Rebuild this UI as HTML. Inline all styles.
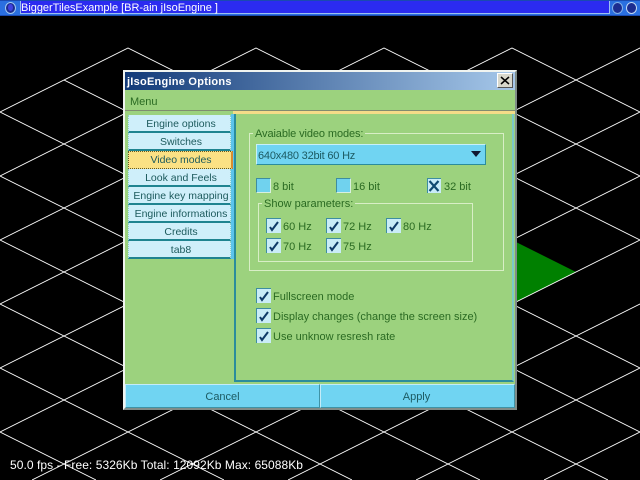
<!DOCTYPE html>
<html><head><meta charset="utf-8"><style>
html,body{margin:0;padding:0;background:#000}
#p{position:relative;width:640px;height:480px;overflow:hidden;background:#000;font-family:"Liberation Sans",sans-serif;font-size:11px}
#p div{position:absolute;box-sizing:border-box}
.t{white-space:nowrap;color:#2a6a22;line-height:14px}
.tab{left:128px;width:103px;height:18px;padding-left:3px;background:#cfeffa;border-bottom:2px solid #1f8490;border-left:1px dotted #8fd0c8;border-right:1px dotted #8fd0c8;color:#1c5a5c;text-align:center;line-height:18px;white-space:nowrap;font-size:10.5px}
.g{border:1px solid #d8eec6}
.leg{background:#9cd27e;padding:0 2px;color:#2a6a22;line-height:12px;white-space:nowrap}
.cb{width:15px;height:15px;background:#c9ecf8;border-left:1px solid #3d8da0;border-top:1px solid #3d8da0}
.cb svg{position:absolute;left:0;top:0}
.e{width:15px;height:15px;background:#70d2ee;border-left:1px solid #3d8da0;border-top:1px solid #3d8da0;border-right:1px solid #d8f0e0;border-bottom:1px solid #d8f0e0}
.btn{top:384px;height:24px;background:#70d4f2;border-top:1px solid #c4ecf8;border-left:1px solid #c4ecf8;border-right:1px solid #3f93a6;border-bottom:1px solid #3f93a6;color:#1c5a62;text-align:center;line-height:24px}
</style></head><body><div id="p">
<svg width="640" height="480" style="position:absolute;left:0;top:0" stroke="#fff" stroke-width="1" fill="none" shape-rendering="crispEdges">
<polygon points="512,240 576,272 512,304 448,272" fill="#008000" stroke="none"/>
<path d="M128 48L512 240M256 48L640 240M384 48L640 176M512 48L640 112M64 80L640 368M0 112L640 432M0 176L608 480M0 240L480 480M0 304L352 480M0 368L224 480M0 432L96 480"/>
<path d="M128 48L0 112M256 48L0 176M384 48L0 240M512 48L0 304M640 48L0 368M640 112L0 432M640 176L32 480M640 240L160 480M640 304L288 480M640 368L416 480M640 432L544 480"/>
</svg>
<div style="left:0;top:0;width:640px;height:16px;background:#2a6fe0;border-top:1px solid #1a4ab0;border-bottom:1px solid #1a4ab0"></div>
<div style="left:20px;top:1px;width:590px;height:13px;background:#2b2bf0;border-bottom:1px solid #9cc0f0;border-left:1px solid #9cc0f0;border-right:1px solid #9cc0f0"></div>
<div style="left:5px;top:2px;width:11px;height:12px;border-radius:50%;background:#1c2c90;border:1px solid #a0c8f0"></div>
<div style="left:8px;top:4px;width:5px;height:7px;border-radius:50%;background:#4040e0"></div>
<div style="left:612px;top:2px;width:11px;height:12px;border-radius:50%;background:#1c2c90;border:1px solid #80b0e8"></div>
<div style="left:626px;top:2px;width:11px;height:12px;border-radius:50%;background:#1c2c90;border:1px solid #c0d8f4"></div>
<div class="t" style="left:21px;top:1px;color:#fff;line-height:14px;letter-spacing:-.02px">BiggerTilesExample [BR-ain jIsoEngine ]</div>

<div style="left:123px;top:70px;width:394px;height:340px;background:#9cd27e;border-left:2px solid #f0f4f0;border-top:2px solid #f0f4f0;border-right:2px solid #808c88;border-bottom:2px solid #808c88"></div>
<div style="left:125px;top:72px;width:390px;height:18px;background:linear-gradient(90deg,#123a78,#a6c8ea)"></div>
<div class="t" style="left:127px;top:75px;color:#fff;font-weight:bold;letter-spacing:.25px">jIsoEngine Options</div>
<div style="left:497px;top:73px;width:16px;height:15px;background:#d8d8cc;border:1px solid;border-color:#fff #555 #555 #fff"></div>
<svg width="16" height="15" style="position:absolute;left:497px;top:73px" stroke="#000" stroke-width="1.500"><path d="M4 4L12 11M12 4L4 11"/></svg>
<div class="t" style="left:130px;top:95px">Menu</div>
<div style="left:125px;top:110px;width:390px;height:1px;background:#808c70"></div>
<div style="left:233px;top:111px;width:282px;height:3px;background:#f4dc88"></div>
<div style="left:234px;top:114px;width:280px;height:268px;border-left:2px solid #2b8c9c;border-bottom:2px solid #2b8c9c;border-right:2px solid #7cc8c8"></div>
<div style="left:231px;top:114px;width:3px;height:145px;background:#5cc4ec"></div>

<div class="tab" style="top:115px">Engine options</div>
<div class="tab" style="top:133px">Switches</div>
<div class="tab" style="top:151px;width:105px;padding-left:2px;background:#fbe184;border:1px dotted #665a20;border-right:2px solid #d88c30;line-height:17px">Video modes</div>
<div class="tab" style="top:169px">Look and Feels</div>
<div class="tab" style="top:187px">Engine key mapping</div>
<div class="tab" style="top:205px">Engine informations</div>
<div class="tab" style="top:223px">Credits</div>
<div class="tab" style="top:241px">tab8</div>

<div class="g" style="left:249px;top:133px;width:255px;height:138px"></div>
<div class="leg" style="left:253px;top:128px;letter-spacing:-.1px">Avaiable video modes:</div>
<div style="left:256px;top:144px;width:230px;height:21px;background:#70d4f2;border-top:1px solid #c8f0f8;border-left:1px solid #c8f0f8;border-right:1px solid #2b8c9c;border-bottom:1px solid #2b8c9c"></div>
<div class="t" style="left:258px;top:149px;color:#1c5a62;letter-spacing:-.2px">640x480 32bit 60 Hz</div>
<svg width="12" height="6" style="position:absolute;left:471px;top:151px"><path d="M0 0H10L5 6Z" fill="#101830"/></svg>

<div class="e" style="left:256px;top:178px"></div><div class="t" style="left:273px;top:180px">8 bit</div>
<div class="e" style="left:336px;top:178px"></div><div class="t" style="left:353px;top:180px">16 bit</div>
<div class="cb" style="left:427px;top:178px;width:14px"><svg width="14" height="15" stroke="#0f4a70" stroke-width="2.200" fill="none"><path d="M1.500 2L10.500 12M10.500 2L1.500 12"/></svg></div><div class="t" style="left:444px;top:180px">32 bit</div>

<div class="g" style="left:258px;top:203px;width:215px;height:59px"></div>
<div class="leg" style="left:262px;top:198px">Show parameters:</div>

<div class="cb" style="left:266px;top:218px"><svg width="14" height="14" stroke="#0f3a68" stroke-width="2" fill="none"><path d="M3 8L5 11L11 3"/></svg></div><div class="t" style="left:283px;top:220px">60 Hz</div>
<div class="cb" style="left:326px;top:218px"><svg width="14" height="14" stroke="#0f3a68" stroke-width="2" fill="none"><path d="M3 8L5 11L11 3"/></svg></div><div class="t" style="left:343px;top:220px">72 Hz</div>
<div class="cb" style="left:386px;top:218px"><svg width="14" height="14" stroke="#0f3a68" stroke-width="2" fill="none"><path d="M3 8L5 11L11 3"/></svg></div><div class="t" style="left:403px;top:220px">80 Hz</div>
<div class="cb" style="left:266px;top:238px"><svg width="14" height="14" stroke="#0f3a68" stroke-width="2" fill="none"><path d="M3 8L5 11L11 3"/></svg></div><div class="t" style="left:283px;top:240px">70 Hz</div>
<div class="cb" style="left:326px;top:238px"><svg width="14" height="14" stroke="#0f3a68" stroke-width="2" fill="none"><path d="M3 8L5 11L11 3"/></svg></div><div class="t" style="left:343px;top:240px">75 Hz</div>

<div class="cb" style="left:256px;top:288px"><svg width="14" height="14" stroke="#0f3a68" stroke-width="2" fill="none"><path d="M3 8L5 11L11 3"/></svg></div><div class="t" style="left:273px;top:290px">Fullscreen mode</div>
<div class="cb" style="left:256px;top:308px"><svg width="14" height="14" stroke="#0f3a68" stroke-width="2" fill="none"><path d="M3 8L5 11L11 3"/></svg></div><div class="t" style="left:273px;top:310px">Display changes (change the screen size)</div>
<div class="cb" style="left:256px;top:328px"><svg width="14" height="14" stroke="#0f3a68" stroke-width="2" fill="none"><path d="M3 8L5 11L11 3"/></svg></div><div class="t" style="left:273px;top:330px">Use unknow resresh rate</div>

<div class="btn" style="left:125px;width:195px">Cancel</div>
<div class="btn" style="left:320px;width:195px;padding-right:2px">Apply</div>

<div class="t" style="left:10px;top:458px;color:#fff;font-size:12px;letter-spacing:.06px">50.0 fps - Free: 5326Kb Total: 12092Kb Max: 65088Kb</div>
</div></body></html>
